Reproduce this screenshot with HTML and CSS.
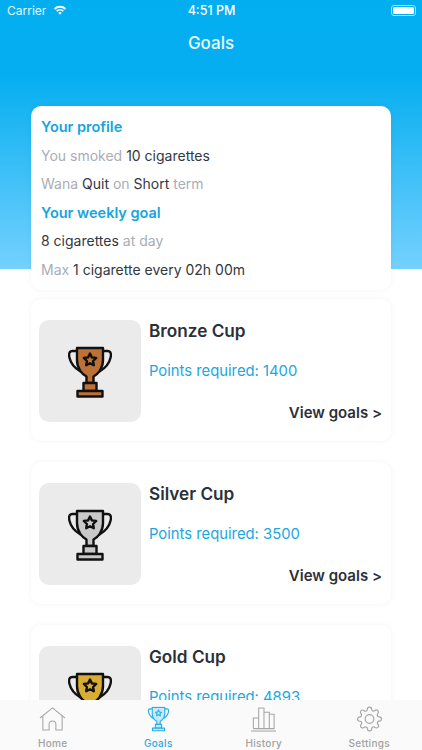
FILE: index.html
```html
<!DOCTYPE html>
<html lang="en">
<head>
<meta charset="utf-8">
<title>Goals</title>
<link rel="stylesheet" href="styles.css">
</head>
<body>
<svg class="defs" width="0" height="0" aria-hidden="true">
  <defs>
    <symbol id="trophy" viewBox="0 0 44 52">
      <path class="handle" d="M9 5H4.5C1.2 5 0.6 8 1.4 11.5C2.6 17 6.500 22 12.500 25.500" />
      <path class="handle" d="M35 5H39.500C42.800 5 43.400 8 42.600 11.500C41.400 17 37.500 22 31.500 25.500" />
      <path class="fill" d="M9 2H35V14C35 23 29.500 28.500 25.500 30.500V37H18.500V30.500C14.500 28.500 9 23 9 14Z" />
      <path class="fill" d="M15.500 37H28.500V45H15.500Z" />
      <path class="fill" d="M9.500 45H34.500V50.500H9.500Z" />
      <path class="star" d="M22 7.500L23.900 11.400L28.200 12L25.100 15L25.800 19.300L22 17.300L18.200 19.300L18.900 15L15.800 12L20.100 11.400Z" />
    </symbol>
  </defs>
</svg>
<div class="screen">
  <div class="hero"></div>
  <div class="status">
    <div class="status-left">
      <span>Carrier</span>
      <svg class="wifi" width="14" height="10" viewBox="0 0 15 11">
        <path d="M0.800 3.600A9.600 9.600 0 0 1 14.200 3.600L12.800 5.100A7.600 7.600 0 0 0 2.200 5.100Z" />
        <path d="M3.200 6.100A6.200 6.200 0 0 1 11.800 6.100L10.400 7.500A4.200 4.200 0 0 0 4.600 7.500Z" />
        <path d="M5.600 8.500A2.800 2.800 0 0 1 9.400 8.500L7.500 10.600Z" />
      </svg>
    </div>
    <span class="time">4:51 PM</span>
    <div class="battery"><span class="battery-level"></span></div>
  </div>
  <header class="nav">Goals</header>
  <main class="content">
    <section class="card profile">
      <h2 class="heading">Your profile</h2>
      <p class="row">You smoked <b>10 cigarettes</b></p>
      <p class="row">Wana <b>Quit</b> on <b>Short</b> term</p>
      <h2 class="heading">Your weekly goal</h2>
      <p class="row"><b>8 cigarettes</b> at day</p>
      <p class="row">Max <b>1 cigarette every 02h 00m</b></p>
    </section>
    <section class="card cup">
      <div class="thumb"><svg class="big-trophy bronze"><use href="#trophy" /></svg></div>
      <div class="cup-text">
        <h3 class="cup-title">Bronze Cup</h3>
        <p class="points">Points required: 1400</p>
        <a class="view">View goals &gt;</a>
      </div>
    </section>
    <section class="card cup">
      <div class="thumb"><svg class="big-trophy silver"><use href="#trophy" /></svg></div>
      <div class="cup-text">
        <h3 class="cup-title">Silver Cup</h3>
        <p class="points">Points required: 3500</p>
        <a class="view">View goals &gt;</a>
      </div>
    </section>
    <section class="card cup">
      <div class="thumb"><svg class="big-trophy gold"><use href="#trophy" /></svg></div>
      <div class="cup-text">
        <h3 class="cup-title">Gold Cup</h3>
        <p class="points">Points required: 4893</p>
      </div>
    </section>
  </main>
  <nav class="tabs">
    <div class="tab">
      <svg class="tab-icon" viewBox="0 0 28 26">
        <path d="M1 12L14 1.500L27 12" />
        <path d="M4 10V24.500H10.500V18.500A3.500 3.500 0 0 1 17.500 18.500V24.500H24V10" />
      </svg>
      <span>Home</span>
    </div>
    <div class="tab active">
      <svg class="tab-icon tab-trophy" viewBox="0 0 28 26"><use href="#trophy" x="2" y="0" width="24" height="26" /></svg>
      <span>Goals</span>
    </div>
    <div class="tab">
      <svg class="tab-icon" viewBox="0 0 28 26">
        <path d="M3.500 23V12H9" />
        <path d="M9 23V1.500H14.500V23" />
        <path d="M14.500 6H20V23" />
        <path d="M20 8H25V23H3.500" />
        <path d="M1 25.500H27" />
      </svg>
      <span>History</span>
    </div>
    <div class="tab">
      <svg class="tab-icon" viewBox="0 0 24 24">
        <circle cx="12" cy="12" r="4" />
        <path d="M19.4 15a1.65 1.65 0 0 0 .33 1.82l.06.06a2 2 0 0 1 0 2.83 2 2 0 0 1-2.83 0l-.06-.06a1.65 1.65 0 0 0-1.82-.33 1.65 1.65 0 0 0-1 1.51V21a2 2 0 0 1-2 2 2 2 0 0 1-2-2v-.09A1.65 1.65 0 0 0 9 19.4a1.65 1.65 0 0 0-1.82.33l-.06.06a2 2 0 0 1-2.83 0 2 2 0 0 1 0-2.83l.06-.06a1.65 1.65 0 0 0 .33-1.82 1.65 1.65 0 0 0-1.51-1H3a2 2 0 0 1-2-2 2 2 0 0 1 2-2h.09A1.65 1.65 0 0 0 4.6 9a1.65 1.65 0 0 0-.33-1.82l-.06-.06a2 2 0 0 1 0-2.83 2 2 0 0 1 2.83 0l.06.06a1.65 1.65 0 0 0 1.82.33H9a1.65 1.65 0 0 0 1-1.51V3a2 2 0 0 1 2-2 2 2 0 0 1 2 2v.09a1.65 1.65 0 0 0 1 1.51 1.65 1.65 0 0 0 1.82-.33l.06-.06a2 2 0 0 1 2.83 0 2 2 0 0 1 0 2.83l-.06.06a1.65 1.65 0 0 0-.33 1.82V9a1.65 1.65 0 0 0 1.51 1H21a2 2 0 0 1 2 2 2 2 0 0 1-2 2h-.09a1.65 1.65 0 0 0-1.51 1z" />
      </svg>
      <span>Settings</span>
    </div>
  </nav>
</div>
</body>
</html>
```

FILE: styles.css
```css
* { box-sizing: border-box; }
html, body { margin: 0; padding: 0; }
body { font-family: Inter, "Liberation Sans", sans-serif; background: #fff; }
.defs { position: absolute; }

.screen {
  position: relative;
  width: 422px;
  height: 750px;
  overflow: hidden;
  display: flex;
  flex-direction: column;
  background: #fff;
}
.hero {
  position: absolute;
  top: 0;
  left: 0;
  right: 0;
  height: 269px;
  background: linear-gradient(180deg, #03aef0 0%, #05aef0 28%, #74d1fe 100%);
}

.status {
  position: relative;
  height: 20px;
  flex: none;
  display: flex;
  align-items: center;
  justify-content: space-between;
  padding: 0 6px 0 7px;
  color: #fff;
  font-size: 12px;
}
.status-left { display: flex; align-items: center; gap: 7px; color: #e4f6fe; }
.wifi { fill: #fff; }
.time {
  position: absolute;
  left: 0;
  right: 0;
  text-align: center;
  font-size: 12.5px;
  font-weight: 500;
  padding-left: 1px;
}
.battery {
  width: 25px;
  height: 11px;
  border: 1px solid #a8e2fb;
  border-radius: 3px;
  padding: 1px;
  display: flex;
}
.battery-level { flex: 1; background: #fff; border-radius: 1.5px; }

.nav {
  position: relative;
  height: 46px;
  flex: none;
  display: flex;
  align-items: center;
  justify-content: center;
  color: #eefaff;
  font-size: 17px;
  font-weight: 500;
}

.content {
  position: relative;
  flex: 1;
  min-height: 0;
  overflow: hidden;
  padding: 40px 31px 0;
}
.card {
  background: #fff;
  border-radius: 10px;
  box-shadow: 0 0 6px rgba(0, 0, 0, 0.05);
}

.profile { height: 184px; padding: 7px 10px; margin-bottom: 9px; }
.heading, .row {
  margin: 0;
  height: 28.5px;
  line-height: 28.5px;
  white-space: nowrap;
}
.heading { color: #15a5df; font-size: 14.5px; font-weight: 600; }
.row { color: #a9adb6; font-size: 14px; font-weight: 400; }
.row b { color: #33373e; font-weight: 400; }

.cup {
  height: 142px;
  margin-bottom: 21px;
  padding: 21px 9px 19px 8px;
  display: flex;
  gap: 8px;
}
.thumb {
  width: 102px;
  height: 102px;
  flex: none;
  background: #ebebeb;
  border-radius: 10px;
  display: flex;
  align-items: center;
  justify-content: center;
}
.big-trophy { width: 44px; height: 52px; overflow: visible; margin-top: 1px; }
.bronze { --main: #bc7236; --ink: #111; }
.silver { --main: #c9c9c9; --ink: #111; }
.gold { --main: #d9ac33; --ink: #111; }
.fill { fill: var(--main); stroke: var(--ink); stroke-width: 2.4; stroke-linejoin: round; }
.handle { fill: none; stroke: var(--ink); stroke-width: 2.4; stroke-linecap: round; }
.star { fill: none; stroke: var(--ink); stroke-width: 2.4; stroke-linejoin: round; }

.cup-text {
  flex: 1;
  min-width: 0;
  display: flex;
  flex-direction: column;
}
.cup-title {
  margin: 0;
  height: 22px;
  line-height: 22px;
  font-size: 17.2px;
  font-weight: 600;
  color: #2b3038;
}
.points {
  margin: 18px 0 0;
  height: 22px;
  line-height: 22px;
  font-size: 14.8px;
  color: #1ba7e0;
  white-space: nowrap;
}
.view {
  margin-top: 20px;
  height: 22px;
  line-height: 22px;
  text-align: right;
  font-size: 15px;
  font-weight: 600;
  color: #2b3038;
}

.tabs {
  position: relative;
  height: 50px;
  flex: none;
  display: grid;
  grid-template-columns: repeat(4, 1fr);
  background: #fafafa;
}
.tab {
  display: flex;
  flex-direction: column;
  align-items: center;
  padding-top: 6px;
  font-size: 10px;
  font-weight: 500;
  letter-spacing: 0.3px;
  color: #a1a1a1;
}
.tab span { margin-top: 5px; line-height: 12px; }
.tab-icon {
  width: 27px;
  height: 26px;
  fill: none;
  stroke: #a6a6a6;
  stroke-width: 1.1;
}
.tab.active { color: #29a8e2; }
.tab-trophy { --main: #c6eafb; --ink: #29aeea; }
```
